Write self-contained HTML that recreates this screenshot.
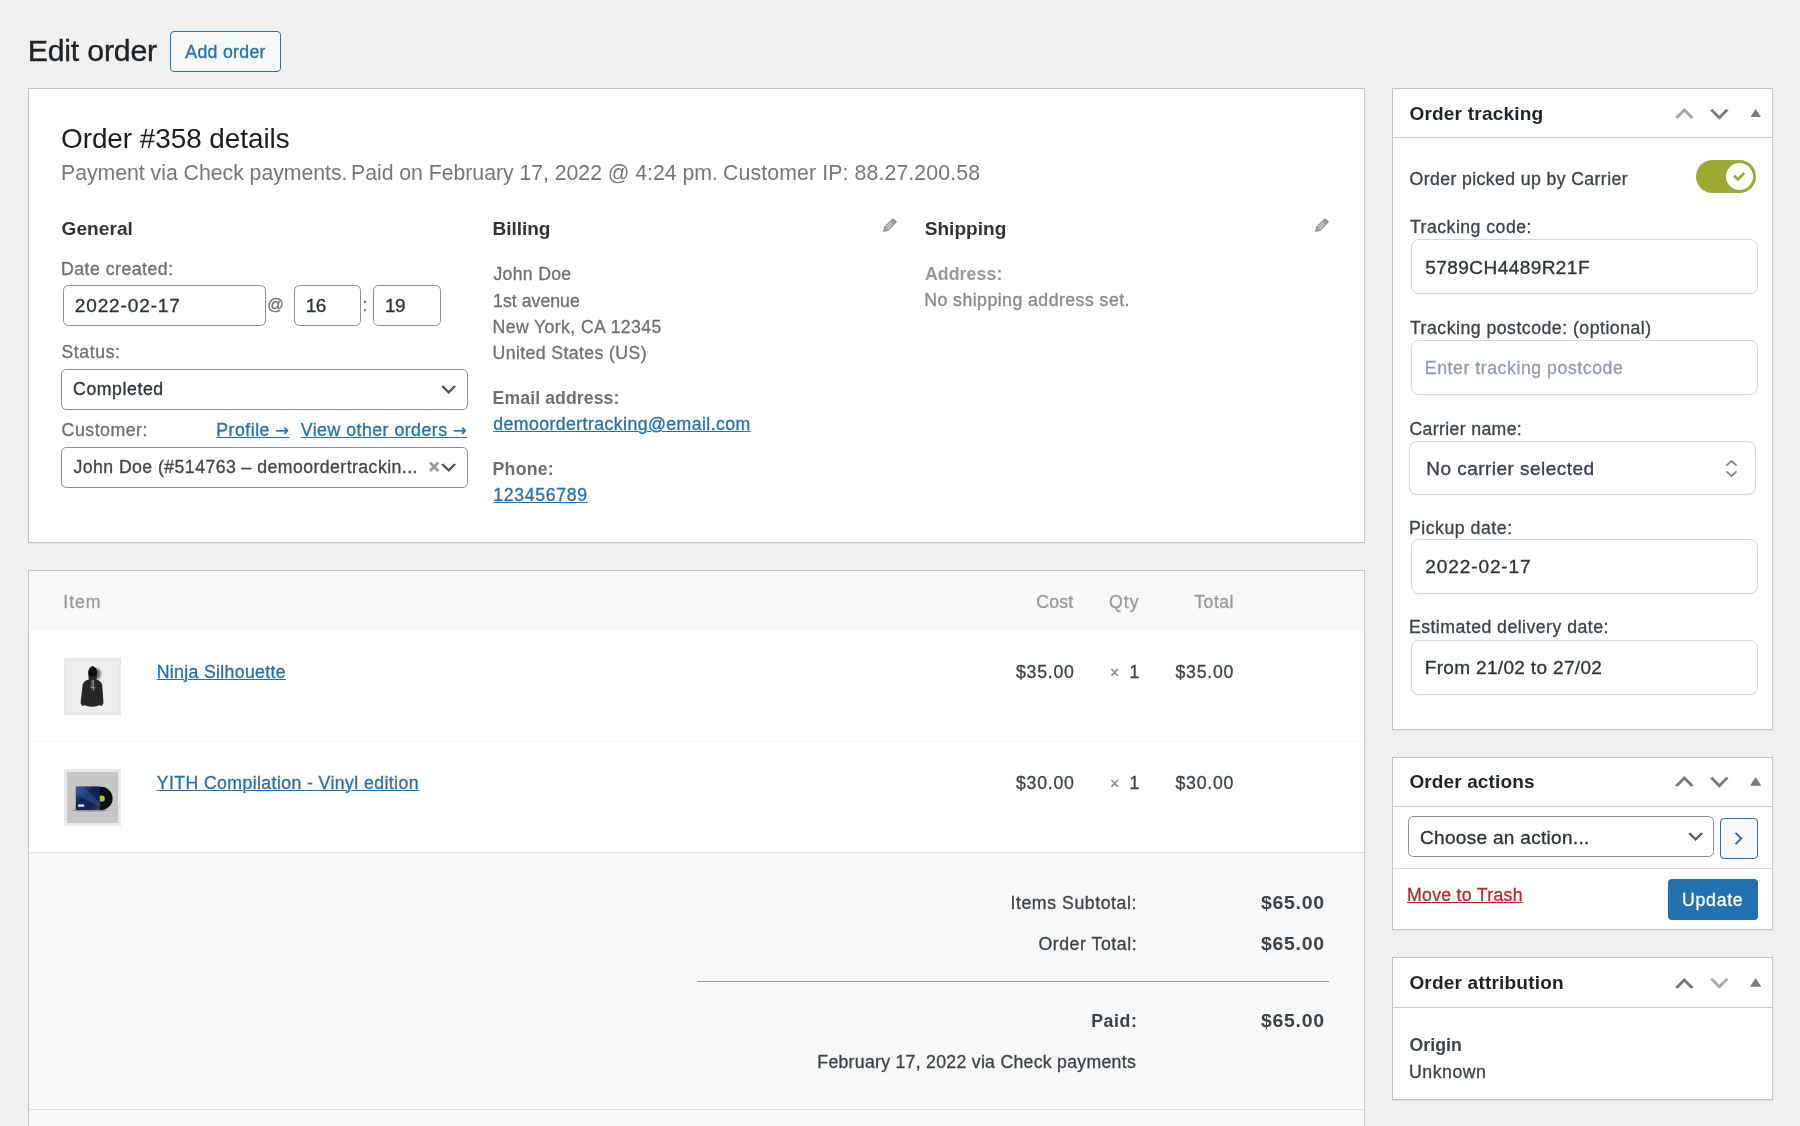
<!DOCTYPE html><html lang="en"><head><meta charset="utf-8"><title>Edit order</title><style>
*{box-sizing:border-box;margin:0;padding:0}
html,body{width:1800px;height:1126px;overflow:hidden;background:#f0f0f1}
body{position:relative;font-family:"Liberation Sans", Arial, sans-serif;will-change:transform}
div,span,a,svg,h1,h2,h3,label,p{position:absolute;display:block}
span,a,h1,h2,h3,label,p{white-space:pre;line-height:1;font-weight:400;text-decoration:none;transform-origin:0 0}
.u{text-decoration:underline;text-decoration-thickness:1.1px;text-underline-offset:1.2px}
.panel{background:#fff;border:1px solid #c3c4c7;box-shadow:0 1px 1px rgba(0,0,0,.04)}
.inp{background:#fff;border:1px solid #8c8f94;border-radius:5.3px}
.yinp{background:#fff;border:1px solid #d0d8e6;border-radius:8px;box-shadow:0 1px 2px rgba(16,24,40,.04)}
.ar{font-family:"DejaVu Sans",sans-serif;position:static;display:inline;font-size:.92em}
</style></head><body>
<div style="left:170px;top:31px;width:111px;height:41px;background:#f6f7f7;border:1px solid #2271b1;border-radius:4px"></div>
<div class="panel" style="left:28px;top:88px;width:1337px;height:455px"></div>
<div class="inp" style="left:63px;top:285px;width:203px;height:41px"></div>
<div class="inp" style="left:294px;top:285px;width:67px;height:41px"></div>
<div class="inp" style="left:373px;top:285px;width:68px;height:41px"></div>
<div class="inp" style="left:61px;top:369px;width:407px;height:41px"></div>
<div class="inp" style="left:61px;top:447px;width:407px;height:41px"></div>
<svg style="left:438.10px;top:379.20px" width="21.33" height="21.33" viewBox="0 0 20 20"><path d="M5 6l5 5 5-5 2 1-7 7-7-7 2-1z" fill="#50575e"/></svg>
<svg style="left:438.10px;top:457.20px" width="21.33" height="21.33" viewBox="0 0 20 20"><path d="M5 6l5 5 5-5 2 1-7 7-7-7 2-1z" fill="#50575e"/></svg>
<svg style="left:877.2px;top:213.6px" width="24" height="24" viewBox="0 0 24 24"><g transform="translate(6 18) rotate(45)"><path d="M0 0 L-2.9 -4.4 L-2.9 -15.9 Q-2.9 -17.1 -1.7 -17.1 L1.7 -17.1 Q2.9 -17.1 2.9 -15.9 L2.9 -4.4 Z" fill="#999"/><path d="M-1 -5.2 L-1 -12.6 M1 -5.2 L1 -12.6" stroke="#fff" stroke-width="0.9" opacity=".85" fill="none"/></g></svg>
<svg style="left:1309.0px;top:213.6px" width="24" height="24" viewBox="0 0 24 24"><g transform="translate(6 18) rotate(45)"><path d="M0 0 L-2.9 -4.4 L-2.9 -15.9 Q-2.9 -17.1 -1.7 -17.1 L1.7 -17.1 Q2.9 -17.1 2.9 -15.9 L2.9 -4.4 Z" fill="#999"/><path d="M-1 -5.2 L-1 -12.6 M1 -5.2 L1 -12.6" stroke="#fff" stroke-width="0.9" opacity=".85" fill="none"/></g></svg>
<div class="panel" style="left:28px;top:570px;width:1337px;height:600px;background:#f8f8f8"></div>
<div style="left:29px;top:631px;width:1335px;height:221px;background:#fff"></div>
<div style="left:29px;top:741px;width:1335px;height:1px;background:#f8f8f8"></div>
<div style="left:29px;top:852px;width:1335px;height:1px;background:#dfdfdf"></div>
<div style="left:29px;top:1109px;width:1335px;height:1px;background:#dfdfdf"></div>
<div style="left:697px;top:981px;width:632px;height:1px;background:#999"></div>
<div style="left:64px;top:658px;width:57px;height:57px;background:#ededed;border:3px solid #e8e8e8"></div>
<svg style="left:64px;top:658px" width="57" height="57" viewBox="0 0 57 57">
<defs><filter id="bl" x="-20%" y="-20%" width="140%" height="140%"><feGaussianBlur stdDeviation="0.45"/></filter><filter id="bl3" x="-50%" y="-50%" width="200%" height="200%"><feGaussianBlur stdDeviation="1.3"/></filter></defs>
<g filter="url(#bl)">
<ellipse cx="32.6" cy="15.8" rx="4.2" ry="5.6" fill="#222" opacity=".6" filter="url(#bl3)"/>
<path d="M28.5 8 C25 9.5 23.6 12.5 24.2 16 L24.8 21.5 C21.5 22.5 19.2 24 18.6 27 L16.6 45 L18.5 48.2 L20.5 47 C24 49.3 32 49.3 35.5 47 L37.5 48.2 L39.5 45 L38.2 27 C37.6 24 35.4 22.6 32.4 21.6 L33.2 16 C33.8 12.5 32.4 9.6 28.5 8 Z" fill="#262626"/>
<path d="M28.5 8 C25.2 9.8 24.4 13 24.8 16.5 C26 19 31.5 19 32.8 16.5 C33.2 13 32.2 9.8 28.5 8Z" fill="#0a0a0a"/>
<path d="M28.2 22 L28.0 31.5 M29.6 22 L29.6 33 M26 29 L31.5 30" stroke="#aaa" stroke-width="1" fill="none" opacity=".75"/>
</g></svg>
<div style="left:64px;top:769px;width:57px;height:57px;background:#c6c6c6;border:3px solid #e8e8e8"></div>
<svg style="left:64px;top:769px" width="57" height="57" viewBox="0 0 57 57">
<defs><filter id="bl2" x="-20%" y="-20%" width="140%" height="140%"><feGaussianBlur stdDeviation="0.4"/></filter>
<linearGradient id="cv" x1="0" y1="0" x2="1" y2="1"><stop offset="0" stop-color="#2f5f9f"/><stop offset=".4" stop-color="#0f2650"/><stop offset=".75" stop-color="#13244a"/><stop offset="1" stop-color="#4a4048"/></linearGradient></defs>
<g filter="url(#bl2)">
<ellipse cx="26" cy="41.3" rx="18" ry="1.5" fill="#000" opacity=".28"/>
<circle cx="37.0" cy="29.4" r="11.6" fill="#0c0c0c"/>
<circle cx="37.6" cy="29.6" r="3.2" fill="#9acd32"/>
<rect x="11.8" y="17.4" width="24" height="23.6" fill="url(#cv)"/>
<path d="M11.8 17.4 L19 17.4 L35.8 34 L35.8 38 L11.8 25 Z" fill="#3b6fb5" opacity=".38"/>
<rect x="14" y="35.4" width="6.2" height="2.4" fill="#fff" opacity=".85"/>
</g></svg>
<div class="panel" style="left:1392px;top:88px;width:381px;height:642px"></div>
<div style="left:1393px;top:137px;width:379px;height:1px;background:#c9cacd"></div>
<svg style="left:1671.00px;top:100.10px" width="26.67" height="26.67" viewBox="0 0 20 20"><path d="M15 14l-5-5-5 5-2-1 7-7 7 7-2 1z" fill="#a7aaad"/></svg>
<svg style="left:1706.20px;top:100.50px" width="26.67" height="26.67" viewBox="0 0 20 20"><path d="M5 6l5 5 5-5 2 1-7 7-7-7 2-1z" fill="#787c82"/></svg>
<svg style="left:1749.6px;top:108.70px" width="11.4" height="8.8" viewBox="0 0 11.4 8.8"><path d="M5.7 0 L11.4 8.8 L0 8.8 Z" fill="#787c82"/></svg>
<div class="panel" style="left:1392px;top:757px;width:381px;height:173px"></div>
<div style="left:1393px;top:806px;width:379px;height:1px;background:#c9cacd"></div>
<svg style="left:1671.00px;top:768.40px" width="26.67" height="26.67" viewBox="0 0 20 20"><path d="M15 14l-5-5-5 5-2-1 7-7 7 7-2 1z" fill="#787c82"/></svg>
<svg style="left:1706.20px;top:768.80px" width="26.67" height="26.67" viewBox="0 0 20 20"><path d="M5 6l5 5 5-5 2 1-7 7-7-7 2-1z" fill="#787c82"/></svg>
<svg style="left:1749.6px;top:777.00px" width="11.4" height="8.8" viewBox="0 0 11.4 8.8"><path d="M5.7 0 L11.4 8.8 L0 8.8 Z" fill="#787c82"/></svg>
<div class="panel" style="left:1392px;top:957px;width:381px;height:143px"></div>
<div style="left:1393px;top:1007px;width:379px;height:1px;background:#c9cacd"></div>
<svg style="left:1671.00px;top:969.80px" width="26.67" height="26.67" viewBox="0 0 20 20"><path d="M15 14l-5-5-5 5-2-1 7-7 7 7-2 1z" fill="#787c82"/></svg>
<svg style="left:1706.20px;top:970.20px" width="26.67" height="26.67" viewBox="0 0 20 20"><path d="M5 6l5 5 5-5 2 1-7 7-7-7 2-1z" fill="#a7aaad"/></svg>
<svg style="left:1749.6px;top:978.40px" width="11.4" height="8.8" viewBox="0 0 11.4 8.8"><path d="M5.7 0 L11.4 8.8 L0 8.8 Z" fill="#787c82"/></svg>
<div style="left:1696px;top:160px;width:60px;height:33px;border-radius:17px;background:#9aaa33"></div>
<div style="left:1726px;top:163px;width:27px;height:27px;border-radius:50%;background:#fff"></div>
<svg style="left:1726px;top:163px" width="27" height="27" viewBox="0 0 27 27"><path d="M8.2 12.8 L12 16.4 L18.2 10" stroke="#9aaa33" stroke-width="2.8" fill="none" stroke-linejoin="round"/></svg>
<div class="yinp" style="left:1411px;top:239px;width:347px;height:55px"></div>
<div class="yinp" style="left:1411px;top:340px;width:347px;height:55px"></div>
<div class="yinp" style="left:1411px;top:539px;width:347px;height:55px"></div>
<div class="yinp" style="left:1411px;top:640px;width:347px;height:55px"></div>
<div class="yinp" style="left:1409px;top:441px;width:347px;height:54px"></div>
<svg style="left:1724px;top:458px" width="15" height="21" viewBox="0 0 15 21"><path d="M3 7.2 L7.5 2.8 L12 7.2 M3 13.8 L7.5 18.2 L12 13.8" stroke="#7b8698" stroke-width="1.7" fill="none" stroke-linecap="round" stroke-linejoin="round"/></svg>
<div class="inp" style="left:1408px;top:816px;width:306px;height:41px"></div>
<svg style="left:1685.20px;top:826.40px" width="21.33" height="21.33" viewBox="0 0 20 20"><path d="M5 6l5 5 5-5 2 1-7 7-7-7 2-1z" fill="#50575e"/></svg>
<div style="left:1720px;top:818px;width:38px;height:41px;background:#f6f7f7;border:1px solid #2271b1;border-radius:4px"></div>
<svg style="left:1720px;top:818px" width="38" height="41" viewBox="0 0 38 41"><path d="M15.6 14.8 L21.2 20.5 L15.6 26.2" stroke="#2271b1" stroke-width="1.9" fill="none"/></svg>
<div style="left:1393px;top:868px;width:379px;height:1px;background:#dcdcde"></div>
<div style="left:1668px;top:879px;width:90px;height:41px;background:#2271b1;border-radius:4px"></div>
<h1 style="left:27.64px;top:36px;font-size:30.30px;color:#1d2327;letter-spacing:-0.203px;-webkit-text-stroke:0.4px #1d2327">Edit order</h1>
<span style="left:185.37px;top:44px;font-size:17.68px;color:#2271b1;letter-spacing:0.311px;-webkit-text-stroke:0.3px #2271b1">Add order</span>
<h2 style="left:60.92px;top:124px;font-size:28.56px;color:#1c1c1c;letter-spacing:-0.062px;transform:scaleX(0.978)">Order #358 details</h2>
<span style="left:60.56px;top:162px;font-size:21.76px;color:#777;letter-spacing:-0.031px;transform:scaleX(0.978)">Payment via Check payments.</span>
<span style="left:350.76px;top:162px;font-size:21.76px;color:#777;letter-spacing:-0.038px;transform:scaleX(0.978)">Paid on February 17, 2022 @ 4:24 pm.</span>
<span style="left:723.16px;top:162px;font-size:21.76px;color:#777;letter-spacing:0.118px;transform:scaleX(0.978)">Customer IP: 88.27.200.58</span>
<h3 style="left:61.49px;top:219px;font-size:19.04px;color:#333;letter-spacing:0.090px;font-weight:700">General</h3>
<h3 style="left:492.52px;top:219px;font-size:19.04px;color:#333;letter-spacing:-0.042px;font-weight:700">Billing</h3>
<h3 style="left:924.69px;top:219px;font-size:19.04px;color:#333;letter-spacing:0.046px;font-weight:700">Shipping</h3>
<span style="left:61.02px;top:261px;font-size:17.68px;color:#707070;letter-spacing:0.499px;-webkit-text-stroke:0.3px #707070">Date created:</span>
<span style="left:74.73px;top:296px;font-size:19.04px;color:#2c3338;letter-spacing:0.869px;-webkit-text-stroke:0.3px #2c3338">2022-02-17</span>
<span style="left:267.21px;top:296px;font-size:16.40px;color:#707070;letter-spacing:0.000px;-webkit-text-stroke:0.3px #707070">@</span>
<span style="left:305.72px;top:296px;font-size:19.04px;color:#2c3338;letter-spacing:-0.627px;-webkit-text-stroke:0.3px #2c3338">16</span>
<span style="left:362.40px;top:297px;font-size:17.68px;color:#707070;letter-spacing:0.000px;-webkit-text-stroke:0.3px #707070">:</span>
<span style="left:385.12px;top:296px;font-size:19.04px;color:#2c3338;letter-spacing:-0.647px;-webkit-text-stroke:0.3px #2c3338">19</span>
<span style="left:61.43px;top:344px;font-size:17.68px;color:#707070;letter-spacing:0.588px;-webkit-text-stroke:0.3px #707070">Status:</span>
<span style="left:73.10px;top:381px;font-size:17.68px;color:#2c3338;letter-spacing:0.569px;-webkit-text-stroke:0.3px #2c3338">Completed</span>
<span style="left:61.60px;top:422px;font-size:17.68px;color:#707070;letter-spacing:0.539px;-webkit-text-stroke:0.3px #707070">Customer:</span>
<a class="u" style="left:216.30px;top:422px;font-size:17.68px;color:#2271b1;letter-spacing:0.501px;-webkit-text-stroke:0.3px #2271b1">Profile <span class="ar">→</span></a>
<a class="u" style="left:300.70px;top:422px;font-size:17.68px;color:#2271b1;letter-spacing:0.510px;-webkit-text-stroke:0.3px #2271b1">View other orders <span class="ar">→</span></a>
<span style="left:73.46px;top:459px;font-size:17.68px;color:#444;letter-spacing:0.443px;-webkit-text-stroke:0.3px #444">John Doe (#514763 – demoordertrackin...</span>
<span style="left:428.63px;top:458px;font-size:18.40px;color:#999;letter-spacing:0.000px;font-weight:700;-webkit-text-stroke:0.7px #999">×</span>
<span style="left:493.46px;top:266px;font-size:17.68px;color:#707070;letter-spacing:0.294px;-webkit-text-stroke:0.3px #707070">John Doe</span>
<span style="left:493.09px;top:293px;font-size:17.68px;color:#707070;letter-spacing:0.029px;-webkit-text-stroke:0.3px #707070">1st avenue</span>
<span style="left:492.52px;top:319px;font-size:17.68px;color:#707070;letter-spacing:0.397px;-webkit-text-stroke:0.3px #707070">New York, CA 12345</span>
<span style="left:492.58px;top:345px;font-size:17.68px;color:#707070;letter-spacing:0.389px;-webkit-text-stroke:0.3px #707070">United States (US)</span>
<span style="left:492.59px;top:390px;font-size:17.68px;color:#707070;letter-spacing:0.084px;font-weight:700">Email address:</span>
<a class="u" style="left:493.30px;top:416px;font-size:17.68px;color:#2271b1;letter-spacing:0.429px;-webkit-text-stroke:0.3px #2271b1">demoordertracking@email.com</a>
<span style="left:492.59px;top:461px;font-size:17.68px;color:#707070;letter-spacing:0.246px;font-weight:700">Phone:</span>
<a class="u" style="left:493.30px;top:487px;font-size:17.68px;color:#2271b1;letter-spacing:0.661px;-webkit-text-stroke:0.3px #2271b1">123456789</a>
<span style="left:924.88px;top:266px;font-size:17.68px;color:#999;letter-spacing:0.125px;font-weight:700">Address:</span>
<span style="left:924.22px;top:292px;font-size:17.68px;color:#888;letter-spacing:0.467px;-webkit-text-stroke:0.3px #888">No shipping address set.</span>
<span style="left:63.29px;top:594px;font-size:17.68px;color:#999;letter-spacing:0.961px;-webkit-text-stroke:0.3px #999">Item</span>
<span style="left:1036.20px;top:594px;font-size:17.68px;color:#999;letter-spacing:0.252px;-webkit-text-stroke:0.3px #999">Cost</span>
<span style="left:1108.98px;top:594px;font-size:17.68px;color:#999;letter-spacing:1.113px;-webkit-text-stroke:0.3px #999">Qty</span>
<span style="left:1194.26px;top:594px;font-size:17.68px;color:#999;letter-spacing:0.487px;-webkit-text-stroke:0.3px #999">Total</span>
<a class="u" style="left:156.70px;top:664px;font-size:17.68px;color:#2271b1;letter-spacing:0.338px;-webkit-text-stroke:0.3px #2271b1">Ninja Silhouette</a>
<span style="left:1015.97px;top:664px;font-size:17.68px;color:#3c434a;letter-spacing:0.770px;-webkit-text-stroke:0.3px #3c434a">$35.00</span>
<span style="left:1109.93px;top:665px;font-size:15.91px;color:#888;letter-spacing:0.000px;-webkit-text-stroke:0.3px #888">×</span>
<span style="left:1129.39px;top:664px;font-size:17.68px;color:#3c434a;letter-spacing:0.000px;-webkit-text-stroke:0.3px #3c434a">1</span>
<span style="left:1175.47px;top:664px;font-size:17.68px;color:#3c434a;letter-spacing:0.754px;-webkit-text-stroke:0.3px #3c434a">$35.00</span>
<a class="u" style="left:156.70px;top:775px;font-size:17.68px;color:#2271b1;letter-spacing:0.408px;-webkit-text-stroke:0.3px #2271b1">YITH Compilation - Vinyl edition</a>
<span style="left:1015.97px;top:775px;font-size:17.68px;color:#3c434a;letter-spacing:0.770px;-webkit-text-stroke:0.3px #3c434a">$30.00</span>
<span style="left:1109.93px;top:776px;font-size:15.91px;color:#888;letter-spacing:0.000px;-webkit-text-stroke:0.3px #888">×</span>
<span style="left:1129.39px;top:775px;font-size:17.68px;color:#3c434a;letter-spacing:0.000px;-webkit-text-stroke:0.3px #3c434a">1</span>
<span style="left:1175.47px;top:775px;font-size:17.68px;color:#3c434a;letter-spacing:0.754px;-webkit-text-stroke:0.3px #3c434a">$30.00</span>
<span style="left:1010.49px;top:895px;font-size:17.68px;color:#3c434a;letter-spacing:0.576px;-webkit-text-stroke:0.3px #3c434a">Items Subtotal:</span>
<span style="left:1260.97px;top:895px;font-size:17.68px;color:#3c434a;letter-spacing:0.664px;font-weight:700;transform:scaleX(1.1)">$65.00</span>
<span style="left:1038.48px;top:936px;font-size:17.68px;color:#3c434a;letter-spacing:0.553px;-webkit-text-stroke:0.3px #3c434a">Order Total:</span>
<span style="left:1260.97px;top:936px;font-size:17.68px;color:#3c434a;letter-spacing:0.664px;font-weight:700;transform:scaleX(1.1)">$65.00</span>
<span style="left:1091.19px;top:1013px;font-size:17.68px;color:#3c434a;letter-spacing:0.613px;font-weight:700">Paid:</span>
<span style="left:1260.97px;top:1013px;font-size:17.68px;color:#3c434a;letter-spacing:0.664px;font-weight:700;transform:scaleX(1.1)">$65.00</span>
<span style="left:817.32px;top:1054px;font-size:17.68px;color:#3c434a;letter-spacing:0.285px;-webkit-text-stroke:0.3px #3c434a">February 17, 2022 via Check payments</span>
<h2 style="left:1409.38px;top:104px;font-size:19.04px;color:#1d2327;letter-spacing:0.206px;font-weight:700">Order tracking</h2>
<span style="left:1409.58px;top:171px;font-size:17.68px;color:#3c434a;letter-spacing:0.391px;-webkit-text-stroke:0.3px #3c434a">Order picked up by Carrier</span>
<span style="left:1409.96px;top:219px;font-size:17.68px;color:#3c434a;letter-spacing:0.481px;-webkit-text-stroke:0.3px #3c434a">Tracking code:</span>
<span style="left:1425.33px;top:258px;font-size:19.04px;color:#2c3338;letter-spacing:0.421px;-webkit-text-stroke:0.3px #2c3338">5789CH4489R21F</span>
<span style="left:1409.96px;top:320px;font-size:17.68px;color:#3c434a;letter-spacing:0.498px;-webkit-text-stroke:0.3px #3c434a">Tracking postcode: (optional)</span>
<span style="left:1424.82px;top:360px;font-size:17.68px;color:#8e9cb3;letter-spacing:0.558px;-webkit-text-stroke:0.3px #8e9cb3">Enter tracking postcode</span>
<span style="left:1409.50px;top:421px;font-size:17.68px;color:#3c434a;letter-spacing:0.351px;-webkit-text-stroke:0.3px #3c434a">Carrier name:</span>
<span style="left:1426.24px;top:459px;font-size:19.04px;color:#334155;letter-spacing:0.450px;-webkit-text-stroke:0.3px #334155">No carrier selected</span>
<span style="left:1408.92px;top:520px;font-size:17.68px;color:#3c434a;letter-spacing:0.536px;-webkit-text-stroke:0.3px #3c434a">Pickup date:</span>
<span style="left:1425.33px;top:557px;font-size:19.04px;color:#2c3338;letter-spacing:0.883px;-webkit-text-stroke:0.3px #2c3338">2022-02-17</span>
<span style="left:1408.92px;top:619px;font-size:17.68px;color:#3c434a;letter-spacing:0.472px;-webkit-text-stroke:0.3px #3c434a">Estimated delivery date:</span>
<span style="left:1424.74px;top:658px;font-size:19.04px;color:#2c3338;letter-spacing:0.321px;-webkit-text-stroke:0.3px #2c3338">From 21/02 to 27/02</span>
<h2 style="left:1409.38px;top:772px;font-size:19.04px;color:#1d2327;letter-spacing:0.112px;font-weight:700">Order actions</h2>
<span style="left:1419.97px;top:828px;font-size:19.04px;color:#2c3338;letter-spacing:0.300px;-webkit-text-stroke:0.3px #2c3338">Choose an action...</span>
<a class="u" style="left:1407.00px;top:887px;font-size:17.68px;color:#b32d2e;letter-spacing:0.295px;-webkit-text-stroke:0.3px #b32d2e">Move to Trash</a>
<span style="left:1682.08px;top:892px;font-size:17.68px;color:#fff;letter-spacing:0.710px;-webkit-text-stroke:0.3px #fff">Update</span>
<h2 style="left:1409.38px;top:973px;font-size:19.04px;color:#1d2327;letter-spacing:0.189px;font-weight:700">Order attribution</h2>
<span style="left:1409.45px;top:1037px;font-size:17.68px;color:#3c434a;letter-spacing:0.080px;font-weight:700">Origin</span>
<span style="left:1408.98px;top:1064px;font-size:17.68px;color:#3c434a;letter-spacing:0.539px;-webkit-text-stroke:0.3px #3c434a">Unknown</span>
</body></html>
